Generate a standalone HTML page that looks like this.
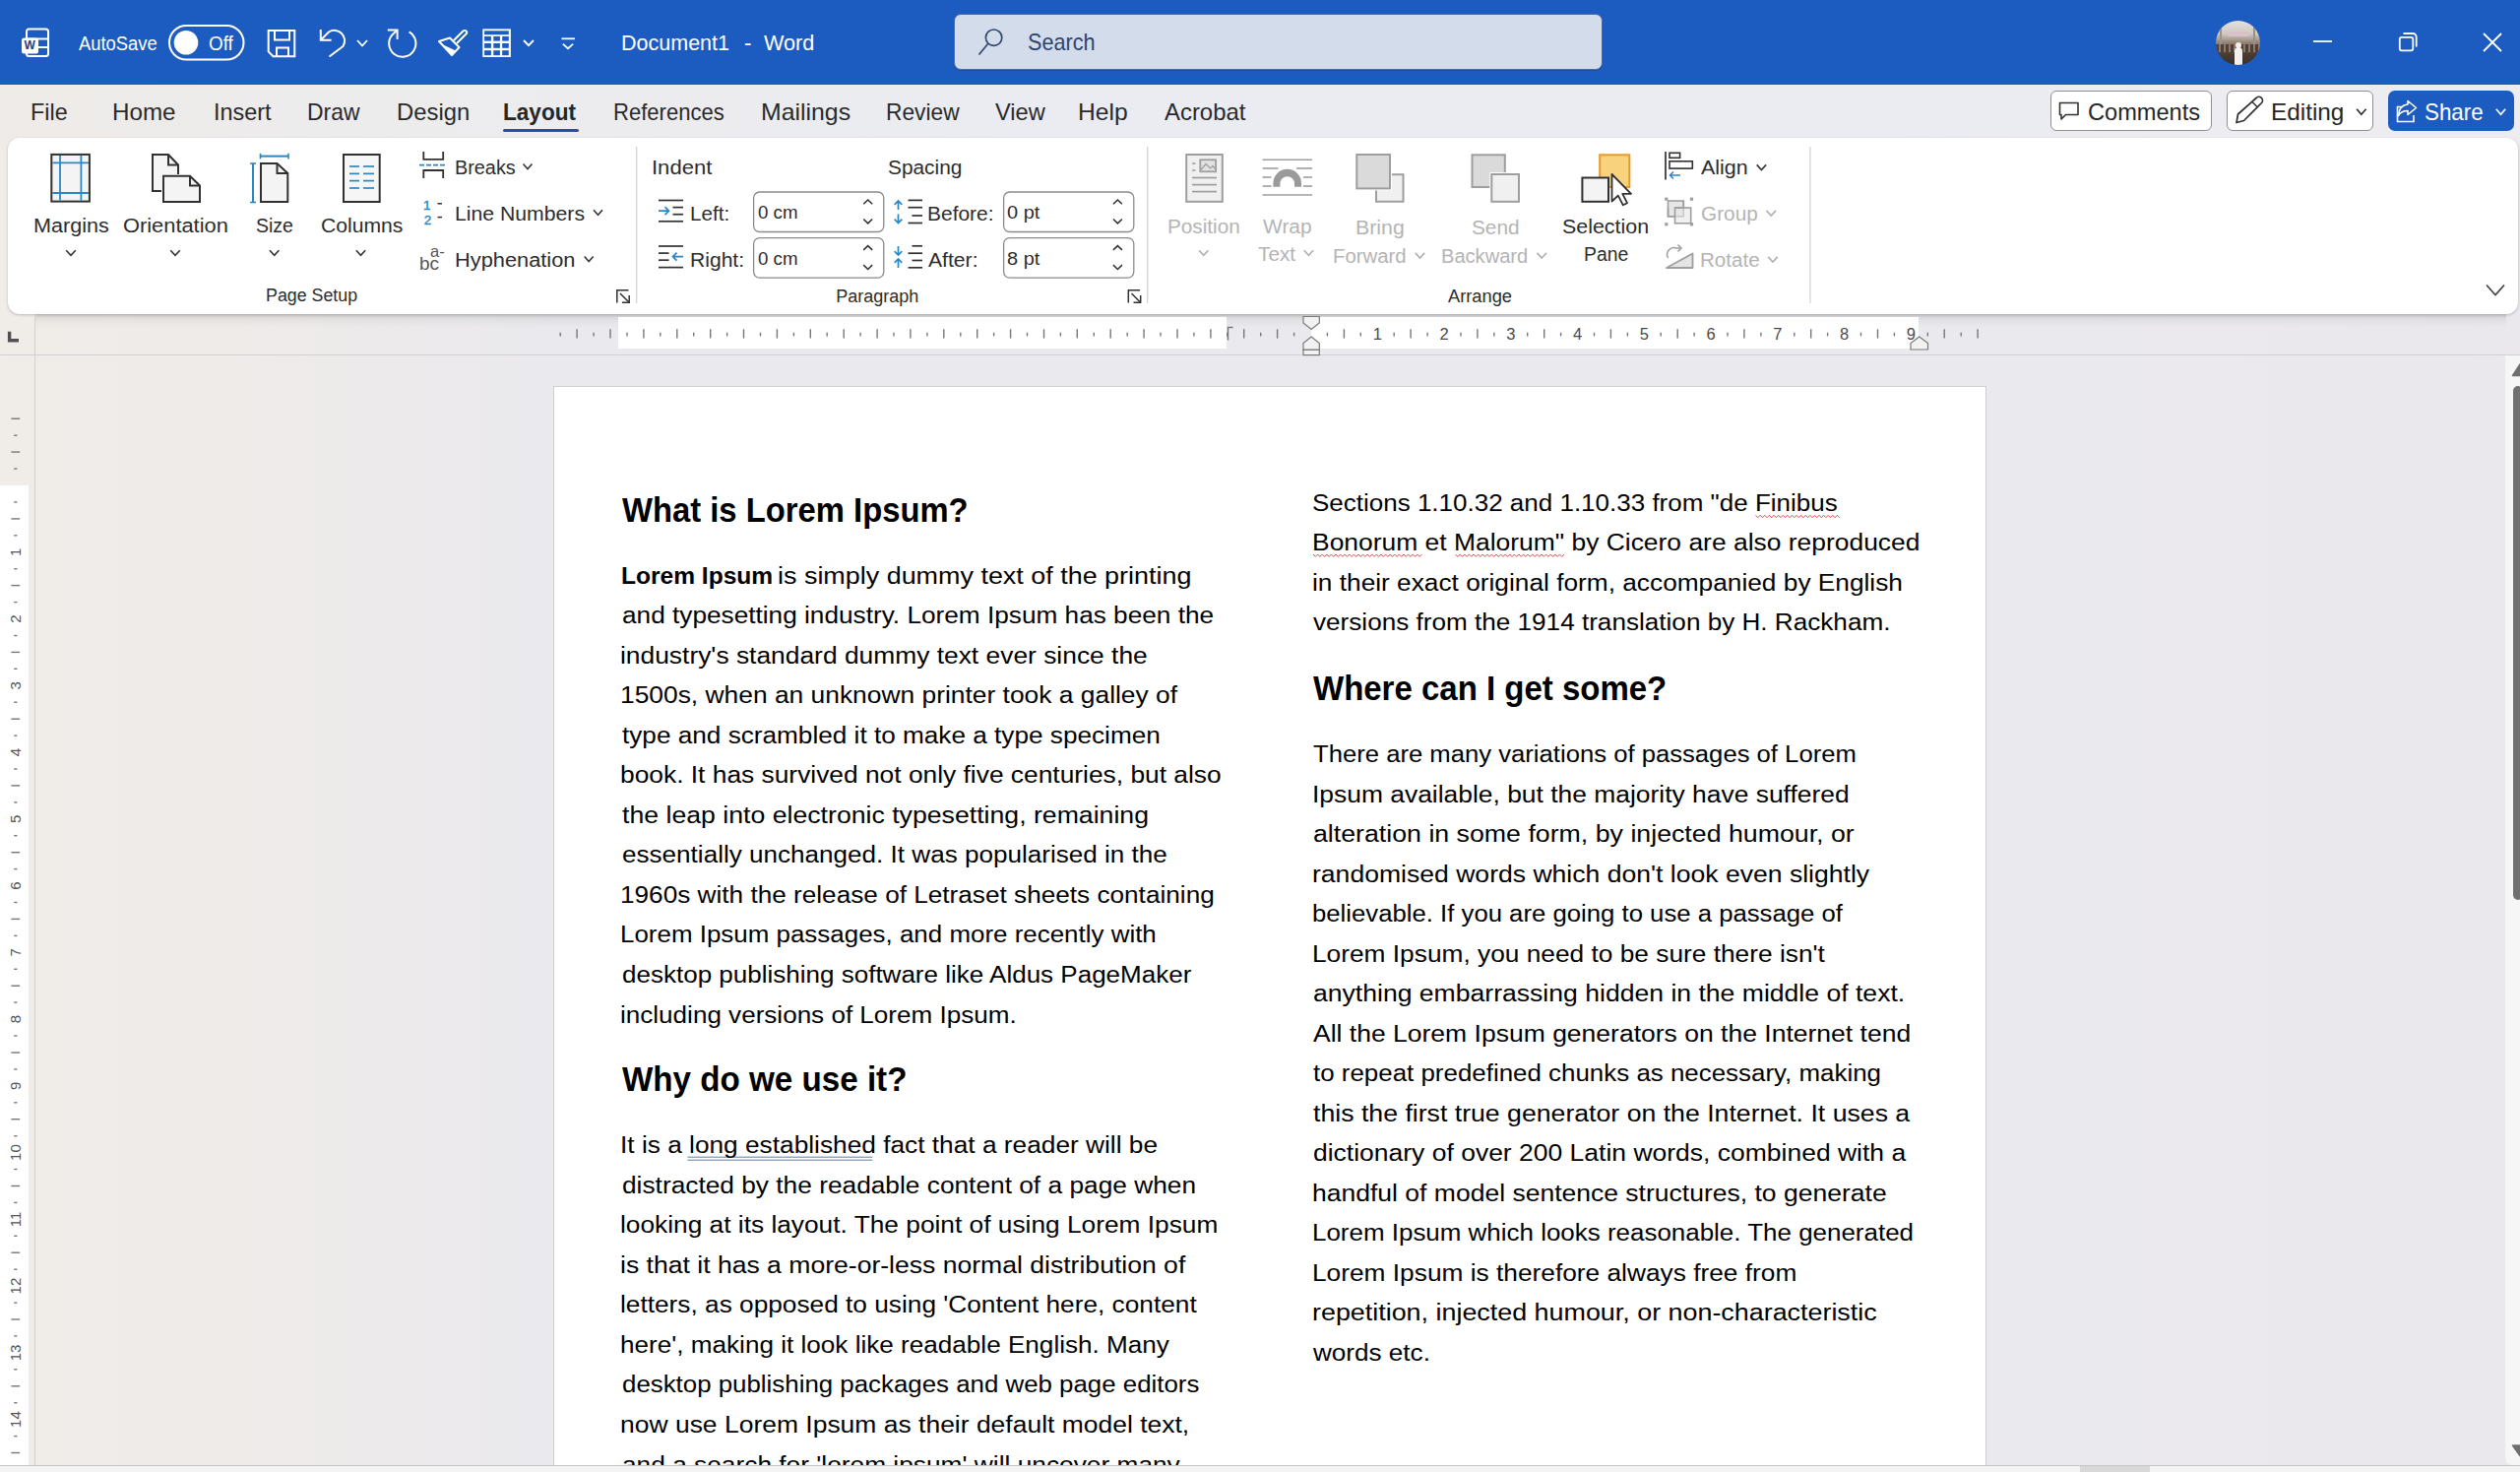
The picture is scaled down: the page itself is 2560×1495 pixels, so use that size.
<!DOCTYPE html>
<html><head><meta charset="utf-8"><style>
*{margin:0;padding:0;box-sizing:border-box}
html,body{width:2560px;height:1495px;overflow:hidden}
body{position:relative;font-family:"Liberation Sans", sans-serif;background:linear-gradient(90deg,#F0ECE8 0%,#EFEBE9 9%,#ECEAEB 16%,#EAE9ED 22%,#EAE9ED 80%,#EAE8ED 100%)}
.t{position:absolute;white-space:pre;transform-origin:0 0;font-family:"Liberation Sans", sans-serif}
.a{position:absolute}
</style></head><body>
<div class="a" style="left:0;top:0;width:2560px;height:86px;background:#1C5BC0"></div>
<div class="a" style="left:0;top:86px;width:2560px;height:60px;background:linear-gradient(90deg,#EEEBE8 0%,#EDECED 15%,#EBECF1 40%,#EBECF1 75%,#EDEDF1 100%)"></div>
<div class="a" style="left:969px;top:14px;width:659px;height:57px;background:#D3DCEB;border:1.5px solid #4E6A9E;border-radius:7px;box-shadow:0 1px 1px rgba(0,0,0,0.15)"></div>
<div class="a" style="left:2251px;top:20.5px;width:45px;height:45px;border-radius:50%;overflow:hidden;background:linear-gradient(180deg,#E4E1DE 0%,#CFC8C2 30%,#8C7A6E 52%,#4A3C33 75%,#3A2F2A 100%)"><div class="a" style="left:13px;top:11px;width:20px;height:5px;background:#D6C2C8"></div><div class="a" style="left:4px;top:5px;width:2px;height:22px;background:#9A908A"></div><div class="a" style="left:38px;top:5px;width:2px;height:22px;background:#9A908A"></div><div class="a" style="left:0px;top:24px;width:45px;height:8px;background:repeating-linear-gradient(90deg,#4E4038 0 3px,#8E7868 3px 5px)"></div><div class="a" style="left:19px;top:27px;width:8px;height:18px;background:#F2EFEC;border-radius:4px 4px 0 0"></div><div class="a" style="left:20px;top:22px;width:6px;height:6px;background:#F2EFEC;border-radius:50%"></div></div>
<div class="a" style="left:2082.5px;top:91.8px;width:164px;height:41.7px;background:#FFFFFF;border:1px solid #8F8F8F;border-radius:6px"></div>
<div class="a" style="left:2262px;top:91.8px;width:149px;height:41.7px;background:#FFFFFF;border:1px solid #8F8F8F;border-radius:6px"></div>
<div class="a" style="left:2426px;top:91.8px;width:127.6px;height:41.7px;background:#1C5BC0;border-radius:7px"></div>
<div class="a" style="left:511.3px;top:130.7px;width:76.4px;height:3.6px;background:#2152A6;border-radius:2px"></div>
<div class="a" style="left:8px;top:140px;width:2550px;height:179px;background:#FFFFFF;border-radius:12px;box-shadow:0 1px 3px rgba(0,0,0,0.22)"></div>
<div class="a" style="left:36px;top:319px;width:2510px;height:41px;background:linear-gradient(180deg,rgba(0,0,0,0.10) 0%,rgba(0,0,0,0.03) 18%,rgba(0,0,0,0) 35%)"></div>
<div class="a" style="left:628px;top:322px;width:618.4px;height:31.7px;background:#FFFFFF"></div>
<div class="a" style="left:1331.5px;top:322px;width:617px;height:31.7px;background:#FFFFFF"></div>
<div class="a" style="left:0;top:360px;width:2560px;height:1px;background:#D2D0D2"></div>
<div class="a" style="left:35px;top:320px;width:1px;height:1168px;background:#D2D0D2"></div>
<div class="a" style="left:0;top:493px;width:29px;height:995px;background:#FFFFFF"></div>
<div class="a" style="left:562px;top:392px;width:1456px;height:1096px;background:#FFFFFF;border-left:1px solid #CFCFCF;border-top:1px solid #CFCFCF;border-right:1px solid #CFCFCF"></div>
<div class="a" style="left:2545px;top:361px;width:15px;height:1127px;background:#F6F6F6;border-radius:0 0 0 7px"></div>
<div class="a" style="left:2553px;top:392px;width:10px;height:522px;background:#707070;border-radius:5px"></div>
<svg class="a" style="left:0;top:0" width="2560" height="1495" viewBox="0 0 2560 1495"><rect x="27" y="29.5" width="22" height="27.5" rx="2.5" fill="none" stroke="#FFFFFF" stroke-width="2"/>
<line x1="27" y1="39.5" x2="49" y2="39.5" stroke="#FFFFFF" stroke-width="2"/>
<line x1="27" y1="48" x2="49" y2="48" stroke="#FFFFFF" stroke-width="2"/>
<rect x="22" y="38.5" width="17" height="16" rx="2.5" fill="#FFFFFF"/>
<text x="24.6" y="50" font-family="Liberation Sans" font-weight="700" font-size="12" fill="#233E80">W</text>
<rect x="172" y="26" width="75.5" height="34.5" rx="17.25" fill="none" stroke="#FFFFFF" stroke-width="2"/>
<circle cx="189" cy="43.2" r="12.3" fill="#FFFFFF"/>
<path d="M272.7 31 H299.3 V57.2 H277.5 L272.7 52.4 Z" fill="none" stroke="#FFFFFF" stroke-width="2"/>
<path d="M279 31 V40.5 H294 V31" fill="none" stroke="#FFFFFF" stroke-width="2"/>
<path d="M281 57.2 V48.5 H293 V57.2" fill="none" stroke="#FFFFFF" stroke-width="2"/>
<path d="M325.8 30 V40.8 H336.6" fill="none" stroke="#FFFFFF" stroke-width="2"/>
<path d="M326.5 40 L334 32.5 A10.5 10.5 0 0 1 348.5 47 L334.5 57.5" fill="none" stroke="#FFFFFF" stroke-width="2" stroke-linejoin="round"/>
<polyline points="363.0,41.0 368.0,46.5 373.0,41.0" fill="none" stroke="#FFFFFF" stroke-width="1.8"/>
<path d="M403.4 30.6 L398.6 35.2 A13.6 13.6 0 1 0 415.6 32.4" fill="none" stroke="#FFFFFF" stroke-width="2" stroke-linejoin="round"/>
<path d="M393.8 30.4 H403.6 V40" fill="none" stroke="#FFFFFF" stroke-width="2"/>
<path d="M461 41 L470.5 31.5 A2 2 0 0 1 473.5 34.5 L464 44" fill="none" stroke="#FFFFFF" stroke-width="2"/>
<path d="M457 38.5 L466.5 48 L459 56 L446 42 Z" fill="none" stroke="#FFFFFF" stroke-width="2" stroke-linejoin="round"/>
<path d="M448 44.5 L459 56 L463 51.5 Z" fill="#FFFFFF"/>
<rect x="490.3" y="29.4" width="28.6" height="28.6" fill="#FFFFFF"/>
<rect x="492.1" y="36.9" width="6.8" height="4.7" fill="#1C5BC0"/>
<rect x="492.1" y="44.0" width="6.8" height="4.8" fill="#1C5BC0"/>
<rect x="492.1" y="51.2" width="6.8" height="5.0" fill="#1C5BC0"/>
<rect x="501.3" y="36.9" width="6.6" height="4.7" fill="#1C5BC0"/>
<rect x="501.3" y="44.0" width="6.6" height="4.8" fill="#1C5BC0"/>
<rect x="501.3" y="51.2" width="6.6" height="5.0" fill="#1C5BC0"/>
<rect x="510.2" y="36.9" width="6.6" height="4.7" fill="#1C5BC0"/>
<rect x="510.2" y="44.0" width="6.6" height="4.8" fill="#1C5BC0"/>
<rect x="510.2" y="51.2" width="6.6" height="5.0" fill="#1C5BC0"/>
<rect x="492.1" y="31.3" width="24.7" height="3.9" fill="#1C5BC0"/>
<polyline points="532.0,41.0 537.0,46.2 542.0,41.0" fill="none" stroke="#FFFFFF" stroke-width="1.9"/>
<line x1="570.5" y1="39.3" x2="584" y2="39.3" stroke="#FFFFFF" stroke-width="1.8"/>
<polyline points="571.8,44.6 577.0,49.2 582.2,44.6" fill="none" stroke="#FFFFFF" stroke-width="1.8"/>
<circle cx="1009.6" cy="38.2" r="8.2" fill="none" stroke="#33476B" stroke-width="1.7"/>
<line x1="1003.8" y1="44.2" x2="994.5" y2="55.5" stroke="#33476B" stroke-width="1.7"/>
<line x1="2350" y1="42" x2="2369" y2="42" stroke="#FFFFFF" stroke-width="1.8"/>
<rect x="2437.8" y="37.8" width="13.5" height="13.5" rx="2" fill="none" stroke="#FFFFFF" stroke-width="1.8"/>
<path d="M2441.5 34 H2451 A3.5 3.5 0 0 1 2454.7 37.7 V47.5" fill="none" stroke="#FFFFFF" stroke-width="1.8"/>
<path d="M2523 34 L2541 52 M2541 34 L2523 52" stroke="#FFFFFF" stroke-width="1.8"/>
<path d="M2092.5 104.5 H2111 V116.5 H2098.5 L2094 121 V116.5 H2092.5 Z" fill="none" stroke="#323130" stroke-width="1.6" stroke-linejoin="round"/>
<path d="M2272 124.5 L2273.5 116 L2292 99.5 A3 3 0 0 1 2297.5 104.5 L2279.5 122.5 Z" fill="none" stroke="#323130" stroke-width="1.7" stroke-linejoin="round"/>
<line x1="2288" y1="103.5" x2="2293.5" y2="109" stroke="#323130" stroke-width="1.5"/>
<polyline points="2394.1,110.8 2398.8,116.2 2403.6,110.8" fill="none" stroke="#323130" stroke-width="1.7"/>
<path d="M2446 106 V102.5 L2454.5 109.5 L2446 116.5 V112.5 C2441 112.5 2438.5 114 2436.5 117.5 C2437 110.5 2440 106.5 2446 106 Z" fill="none" stroke="#FFFFFF" stroke-width="1.6" stroke-linejoin="round"/>
<path d="M2441 108.5 H2435.5 V123.5 H2452 V117" fill="none" stroke="#FFFFFF" stroke-width="1.6"/>
<polyline points="2535.8,110.8 2540.5,116.2 2545.2,110.8" fill="none" stroke="#FFFFFF" stroke-width="1.7"/>
<polyline points="2526.0,289.5 2535.0,299.5 2544.0,289.5" fill="none" stroke="#404040" stroke-width="1.6"/>
<rect x="52.3" y="156.9" width="38.6" height="47.7" fill="#F4F4F4" stroke="#323130" stroke-width="2"/>
<line x1="61" y1="157.9" x2="61" y2="203.6" stroke="#2B87C4" stroke-width="1.8"/>
<line x1="82.4" y1="157.9" x2="82.4" y2="203.6" stroke="#2B87C4" stroke-width="1.8"/>
<line x1="53.3" y1="165.4" x2="89.9" y2="165.4" stroke="#2B87C4" stroke-width="1.8"/>
<line x1="53.3" y1="196" x2="89.9" y2="196" stroke="#2B87C4" stroke-width="1.8"/>
<path d="M164 194 H155 V157 H171 L181 167.5 V177" fill="#F4F4F4" stroke="#323130" stroke-width="2" stroke-linejoin="miter"/>
<path d="M171 157 V167.5 H181" fill="none" stroke="#323130" stroke-width="2"/>
<path d="M166 178.8 H193 L203 188.5 V205 H166 Z" fill="#F4F4F4" stroke="#323130" stroke-width="2"/>
<path d="M193 178.8 V188.5 H203" fill="none" stroke="#323130" stroke-width="2"/>
<line x1="257" y1="166" x2="257" y2="205.5" stroke="#2B87C4" stroke-width="2"/>
<line x1="254" y1="166" x2="260" y2="166" stroke="#2B87C4" stroke-width="1.6"/>
<line x1="254" y1="205.5" x2="260" y2="205.5" stroke="#2B87C4" stroke-width="1.6"/>
<line x1="264.5" y1="158.6" x2="293" y2="158.6" stroke="#2B87C4" stroke-width="2"/>
<line x1="264.5" y1="155.8" x2="264.5" y2="161.4" stroke="#2B87C4" stroke-width="1.6"/>
<line x1="293" y1="155.8" x2="293" y2="161.4" stroke="#2B87C4" stroke-width="1.6"/>
<path d="M265 166 H281.5 L292.3 176 V205 H265 Z" fill="#F4F4F4" stroke="#323130" stroke-width="2"/>
<path d="M281.5 166 V176 H292.3" fill="none" stroke="#323130" stroke-width="2"/>
<rect x="349" y="157" width="36.7" height="48" fill="#F6F6F6" stroke="#323130" stroke-width="2"/>
<line x1="355" y1="169" x2="365" y2="169" stroke="#2B87C4" stroke-width="1.7"/>
<line x1="369" y1="169" x2="380" y2="169" stroke="#2B87C4" stroke-width="1.7"/>
<line x1="355" y1="176.4" x2="365" y2="176.4" stroke="#2B87C4" stroke-width="1.7"/>
<line x1="369" y1="176.4" x2="380" y2="176.4" stroke="#2B87C4" stroke-width="1.7"/>
<line x1="355" y1="183.6" x2="365" y2="183.6" stroke="#2B87C4" stroke-width="1.7"/>
<line x1="369" y1="183.6" x2="380" y2="183.6" stroke="#2B87C4" stroke-width="1.7"/>
<line x1="355" y1="191" x2="365" y2="191" stroke="#2B87C4" stroke-width="1.7"/>
<line x1="369" y1="191" x2="380" y2="191" stroke="#2B87C4" stroke-width="1.7"/>
<polyline points="67.2,254.2 72.0,259.4 76.8,254.2" fill="none" stroke="#363636" stroke-width="1.6"/>
<polyline points="173.2,254.2 178.0,259.4 182.8,254.2" fill="none" stroke="#363636" stroke-width="1.6"/>
<polyline points="273.9,254.2 278.7,259.4 283.4,254.2" fill="none" stroke="#363636" stroke-width="1.6"/>
<polyline points="361.8,254.2 366.5,259.4 371.2,254.2" fill="none" stroke="#363636" stroke-width="1.6"/>
<path d="M430.3 154 V161.8 H450.2 V154" fill="none" stroke="#323130" stroke-width="1.8"/>
<line x1="426" y1="167.6" x2="453" y2="167.6" stroke="#2B87C4" stroke-width="1.6" stroke-dasharray="5,2"/>
<path d="M430.3 181 V173 H450.2 V181" fill="none" stroke="#323130" stroke-width="1.8"/>
<polyline points="531.5,166.5 536.0,171.5 540.5,166.5" fill="none" stroke="#363636" stroke-width="1.6"/>
<text x="430" y="212.5" font-family="Liberation Sans" font-size="13.5" fill="#2B87C4" stroke="#2B87C4" stroke-width="0.4">1</text>
<text x="430.8" y="227.8" font-family="Liberation Sans" font-size="13.5" fill="#2B87C4" stroke="#2B87C4" stroke-width="0.4">2</text>
<line x1="444.5" y1="206.8" x2="449" y2="206.8" stroke="#323130" stroke-width="1.5"/>
<line x1="444.5" y1="220.6" x2="449" y2="220.6" stroke="#323130" stroke-width="1.5"/>
<polyline points="603.0,213.3 607.5,218.3 612.0,213.3" fill="none" stroke="#363636" stroke-width="1.6"/>
<text x="437" y="260.8" font-family="Liberation Sans" font-size="16.5" fill="#555555">a-</text>
<text x="426" y="274.3" font-family="Liberation Sans" font-size="19" fill="#555555">bc</text>
<polyline points="593.7,260.5 598.2,265.5 602.7,260.5" fill="none" stroke="#363636" stroke-width="1.6"/>
<path d="M626.8 307.5 V294.8 H638.5" fill="none" stroke="#323130" stroke-width="1.5"/>
<path d="M630 298 L639 307" fill="none" stroke="#323130" stroke-width="1.5"/>
<path d="M639.2 300 V307.3 H632" fill="none" stroke="#323130" stroke-width="1.5"/>
<path d="M1146.3 307.5 V294.8 H1158.0" fill="none" stroke="#323130" stroke-width="1.5"/>
<path d="M1149.5 298 L1158.5 307" fill="none" stroke="#323130" stroke-width="1.5"/>
<path d="M1158.7 300 V307.3 H1151.5" fill="none" stroke="#323130" stroke-width="1.5"/>
<line x1="646.7" y1="149" x2="646.7" y2="308" stroke="#D4D4D4" stroke-width="1.3"/>
<line x1="1165.7" y1="149" x2="1165.7" y2="308" stroke="#D4D4D4" stroke-width="1.3"/>
<line x1="1838.9" y1="149" x2="1838.9" y2="308" stroke="#D4D4D4" stroke-width="1.3"/>
<line x1="669" y1="203.5" x2="694" y2="203.5" stroke="#323130" stroke-width="1.7"/>
<line x1="683.5" y1="210.6" x2="694" y2="210.6" stroke="#323130" stroke-width="1.7"/>
<line x1="683.5" y1="217.7" x2="694" y2="217.7" stroke="#323130" stroke-width="1.7"/>
<line x1="669" y1="224.8" x2="694" y2="224.8" stroke="#323130" stroke-width="1.7"/>
<path d="M669 214.2 H679.5 M675.5 210.2 L679.5 214.2 L675.5 218.2" fill="none" stroke="#2B87C4" stroke-width="1.7"/>
<line x1="669" y1="250" x2="694" y2="250" stroke="#323130" stroke-width="1.7"/>
<line x1="669" y1="257.1" x2="679.5" y2="257.1" stroke="#323130" stroke-width="1.7"/>
<line x1="669" y1="264.2" x2="679.5" y2="264.2" stroke="#323130" stroke-width="1.7"/>
<line x1="669" y1="271.6" x2="694" y2="271.6" stroke="#323130" stroke-width="1.7"/>
<path d="M694 260.7 H683.5 M687.5 256.7 L683.5 260.7 L687.5 264.7" fill="none" stroke="#2B87C4" stroke-width="1.7"/>
<rect x="765.6" y="195.0" width="132.2" height="40.5" rx="6" fill="#FFFFFF" stroke="#8A8A8A" stroke-width="1.3"/>
<rect x="765.6" y="241.6" width="132.2" height="40.5" rx="6" fill="#FFFFFF" stroke="#8A8A8A" stroke-width="1.3"/>
<rect x="1019.6" y="195.0" width="132.2" height="40.5" rx="6" fill="#FFFFFF" stroke="#8A8A8A" stroke-width="1.3"/>
<rect x="1019.6" y="241.6" width="132.2" height="40.5" rx="6" fill="#FFFFFF" stroke="#8A8A8A" stroke-width="1.3"/>
<polyline points="877.2,207.3 881.7,203.0 886.2,207.3" fill="none" stroke="#323130" stroke-width="1.5"/>
<polyline points="877.2,222.5 881.7,226.9 886.2,222.5" fill="none" stroke="#323130" stroke-width="1.5"/>
<polyline points="877.2,253.9 881.7,249.6 886.2,253.9" fill="none" stroke="#323130" stroke-width="1.5"/>
<polyline points="877.2,269.1 881.7,273.5 886.2,269.1" fill="none" stroke="#323130" stroke-width="1.5"/>
<polyline points="1130.9,207.3 1135.4,203.0 1139.9,207.3" fill="none" stroke="#323130" stroke-width="1.5"/>
<polyline points="1130.9,222.5 1135.4,226.9 1139.9,222.5" fill="none" stroke="#323130" stroke-width="1.5"/>
<polyline points="1130.9,253.9 1135.4,249.6 1139.9,253.9" fill="none" stroke="#323130" stroke-width="1.5"/>
<polyline points="1130.9,269.1 1135.4,273.5 1139.9,269.1" fill="none" stroke="#323130" stroke-width="1.5"/>
<path d="M912.5 213 V204 M908.7 207.8 L912.5 204 L916.3 207.8" fill="none" stroke="#2B87C4" stroke-width="1.7"/>
<path d="M912.5 217.5 V226.5 M908.7 222.7 L912.5 226.5 L916.3 222.7" fill="none" stroke="#2B87C4" stroke-width="1.7"/>
<line x1="922.5" y1="203.4" x2="937" y2="203.4" stroke="#323130" stroke-width="1.7"/>
<line x1="922.5" y1="210.7" x2="937" y2="210.7" stroke="#323130" stroke-width="1.7"/>
<line x1="926.5" y1="219" x2="937" y2="219" stroke="#323130" stroke-width="1.7"/>
<line x1="922.5" y1="226.5" x2="937" y2="226.5" stroke="#323130" stroke-width="1.7"/>
<path d="M912.5 250 V259 M908.7 255.2 L912.5 259 L916.3 255.2" fill="none" stroke="#2B87C4" stroke-width="1.7"/>
<path d="M912.5 272 V263 M908.7 266.8 L912.5 263 L916.3 266.8" fill="none" stroke="#2B87C4" stroke-width="1.7"/>
<line x1="926.5" y1="249.8" x2="937" y2="249.8" stroke="#323130" stroke-width="1.7"/>
<line x1="922.5" y1="257.2" x2="937" y2="257.2" stroke="#323130" stroke-width="1.7"/>
<line x1="926.5" y1="264.5" x2="937" y2="264.5" stroke="#323130" stroke-width="1.7"/>
<line x1="922.5" y1="271.8" x2="937" y2="271.8" stroke="#323130" stroke-width="1.7"/>
<rect x="1205.2" y="157" width="36.6" height="47.8" fill="#F0F0F0" stroke="#9E9E9E" stroke-width="2"/>
<rect x="1219.3" y="162.3" width="15.8" height="12" fill="#E2E2E2" stroke="#9E9E9E" stroke-width="1.8"/>
<path d="M1220 172.5 L1225 166.5 L1229.5 171 L1232 168.5 L1234.5 171.5" fill="none" stroke="#9E9E9E" stroke-width="1.2"/>
<line x1="1211" y1="180.5" x2="1236" y2="180.5" stroke="#9E9E9E" stroke-width="1.7"/>
<line x1="1211" y1="187.6" x2="1236" y2="187.6" stroke="#9E9E9E" stroke-width="1.7"/>
<line x1="1211" y1="194.6" x2="1236" y2="194.6" stroke="#9E9E9E" stroke-width="1.7"/>
<line x1="1211" y1="166" x2="1214.5" y2="166" stroke="#9E9E9E" stroke-width="1.5"/>
<line x1="1211" y1="173" x2="1214.5" y2="173" stroke="#9E9E9E" stroke-width="1.5"/>
<polyline points="1218.0,254.2 1222.8,259.4 1227.5,254.2" fill="none" stroke="#B0B0B0" stroke-width="1.6"/>
<line x1="1282.6" y1="162.2" x2="1333" y2="162.2" stroke="#9E9E9E" stroke-width="1.6"/>
<line x1="1282.6" y1="171" x2="1298.5" y2="171" stroke="#9E9E9E" stroke-width="1.6"/>
<line x1="1317" y1="171" x2="1333" y2="171" stroke="#9E9E9E" stroke-width="1.6"/>
<line x1="1282.6" y1="180" x2="1291.5" y2="180" stroke="#9E9E9E" stroke-width="1.6"/>
<line x1="1324" y1="180" x2="1333" y2="180" stroke="#9E9E9E" stroke-width="1.6"/>
<line x1="1282.6" y1="189" x2="1291.5" y2="189" stroke="#9E9E9E" stroke-width="1.6"/>
<line x1="1324" y1="189" x2="1333" y2="189" stroke="#9E9E9E" stroke-width="1.6"/>
<line x1="1282.6" y1="198" x2="1333" y2="198" stroke="#9E9E9E" stroke-width="1.6"/>
<path d="M1293.4 189.8 V186 A14.3 14.3 0 0 1 1322 186 V189.8 H1315 V186.5 A7.3 7.3 0 0 0 1300.4 186.5 V189.8 Z" fill="#9A9A9A"/>
<polyline points="1324.7,254.2 1329.4,259.4 1334.2,254.2" fill="none" stroke="#B0B0B0" stroke-width="1.6"/>
<path d="M1412 177.3 H1425.5 V204.8 H1398 V191.4 Z" fill="#F0F0F0" stroke="#9E9E9E" stroke-width="2"/>
<rect x="1376.3" y="155" width="37.7" height="38.4" fill="#FFFFFF"/>
<rect x="1378.3" y="157" width="33.7" height="34.4" fill="#DADADA" stroke="#9E9E9E" stroke-width="2"/>
<polyline points="1437.8,256.9 1442.5,262.1 1447.2,256.9" fill="none" stroke="#B0B0B0" stroke-width="1.6"/>
<rect x="1495.5" y="157.3" width="33.3" height="32.7" fill="#DADADA" stroke="#9E9E9E" stroke-width="2"/>
<rect x="1513.3" y="175" width="31.7" height="31.8" fill="#FFFFFF"/>
<rect x="1515.3" y="177" width="27.7" height="27.8" fill="#F0F0F0" stroke="#9E9E9E" stroke-width="2"/>
<polyline points="1561.5,256.9 1566.3,262.1 1571.0,256.9" fill="none" stroke="#B0B0B0" stroke-width="1.6"/>
<rect x="1625.2" y="157.3" width="30.1" height="32.7" fill="#F8D27C" stroke="#E49A2A" stroke-width="2"/>
<rect x="1607.4" y="180.5" width="26.6" height="24.3" fill="#F4F4F4" stroke="#323130" stroke-width="2"/>
<path d="M1637.5 177 V204.5 L1643.8 198.7 L1648.8 208.3 L1653 206.2 L1648.3 196.8 H1657 Z" fill="#FFFFFF" stroke="#323130" stroke-width="1.8" stroke-linejoin="round"/>
<line x1="1692" y1="154" x2="1692" y2="182.5" stroke="#323130" stroke-width="1.7"/>
<rect x="1696" y="155.3" width="10.6" height="5" fill="none" stroke="#323130" stroke-width="1.6"/>
<rect x="1696" y="163.8" width="23.3" height="7.3" fill="none" stroke="#323130" stroke-width="1.6"/>
<path d="M1707 178 H1696.5 M1700 174.5 L1696.5 178 L1700 181.5" fill="none" stroke="#2B87C4" stroke-width="1.6"/>
<polyline points="1784.7,167.4 1789.4,172.6 1794.2,167.4" fill="none" stroke="#363636" stroke-width="1.6"/>
<rect x="1691.2" y="200.6" width="3.2" height="3.2" fill="#9E9E9E"/>
<rect x="1716.9" y="200.6" width="3.2" height="3.2" fill="#9E9E9E"/>
<rect x="1691.2" y="226.20000000000002" width="3.2" height="3.2" fill="#9E9E9E"/>
<rect x="1716.9" y="226.20000000000002" width="3.2" height="3.2" fill="#9E9E9E"/>
<rect x="1694.5" y="204" width="15.8" height="15.8" fill="#E6E6E6" stroke="#9E9E9E" stroke-width="1.6"/>
<rect x="1701.5" y="211" width="16.2" height="15.8" fill="#E6E6E6" fill-opacity="0.6" stroke="#9E9E9E" stroke-width="1.6"/>
<path d="M1694.5 211 V219.8 H1701.5" fill="none" stroke="#9E9E9E" stroke-width="1.6"/>
<path d="M1701.5 211 H1710.3 V204" fill="none" stroke="#9E9E9E" stroke-width="1.6"/>
<polyline points="1794.5,213.9 1799.2,219.1 1804.0,213.9" fill="none" stroke="#B0B0B0" stroke-width="1.6"/>
<path d="M1693 272 L1719.5 257.5 V272 Z" fill="#E4E4E4" stroke="#9E9E9E" stroke-width="1.8" stroke-linejoin="round"/>
<path d="M1694.5 262 A7 7 0 0 1 1703 252 H1708" fill="none" stroke="#9E9E9E" stroke-width="1.5"/>
<path d="M1704.5 248.5 L1708 252 L1704.5 255.5" fill="none" stroke="#9E9E9E" stroke-width="1.5"/>
<polyline points="1796.2,260.9 1801.0,266.1 1805.8,260.9" fill="none" stroke="#B0B0B0" stroke-width="1.6"/>
<line x1="569.2" y1="337.8" x2="569.2" y2="341.4" stroke="#777777" stroke-width="1.4"/>
<line x1="586.1" y1="334.3" x2="586.1" y2="343.6" stroke="#777777" stroke-width="1.4"/>
<line x1="603.1" y1="337.8" x2="603.1" y2="341.4" stroke="#777777" stroke-width="1.4"/>
<line x1="620.0" y1="334.3" x2="620.0" y2="343.6" stroke="#777777" stroke-width="1.4"/>
<line x1="637.0" y1="337.8" x2="637.0" y2="341.4" stroke="#777777" stroke-width="1.4"/>
<line x1="653.9" y1="334.3" x2="653.9" y2="343.6" stroke="#777777" stroke-width="1.4"/>
<line x1="670.8" y1="337.8" x2="670.8" y2="341.4" stroke="#777777" stroke-width="1.4"/>
<line x1="687.8" y1="334.3" x2="687.8" y2="343.6" stroke="#777777" stroke-width="1.4"/>
<line x1="704.7" y1="337.8" x2="704.7" y2="341.4" stroke="#777777" stroke-width="1.4"/>
<line x1="721.7" y1="334.3" x2="721.7" y2="343.6" stroke="#777777" stroke-width="1.4"/>
<line x1="738.6" y1="337.8" x2="738.6" y2="341.4" stroke="#777777" stroke-width="1.4"/>
<line x1="755.5" y1="334.3" x2="755.5" y2="343.6" stroke="#777777" stroke-width="1.4"/>
<line x1="772.5" y1="337.8" x2="772.5" y2="341.4" stroke="#777777" stroke-width="1.4"/>
<line x1="789.4" y1="334.3" x2="789.4" y2="343.6" stroke="#777777" stroke-width="1.4"/>
<line x1="806.4" y1="337.8" x2="806.4" y2="341.4" stroke="#777777" stroke-width="1.4"/>
<line x1="823.3" y1="334.3" x2="823.3" y2="343.6" stroke="#777777" stroke-width="1.4"/>
<line x1="840.2" y1="337.8" x2="840.2" y2="341.4" stroke="#777777" stroke-width="1.4"/>
<line x1="857.2" y1="334.3" x2="857.2" y2="343.6" stroke="#777777" stroke-width="1.4"/>
<line x1="874.1" y1="337.8" x2="874.1" y2="341.4" stroke="#777777" stroke-width="1.4"/>
<line x1="891.1" y1="334.3" x2="891.1" y2="343.6" stroke="#777777" stroke-width="1.4"/>
<line x1="908.0" y1="337.8" x2="908.0" y2="341.4" stroke="#777777" stroke-width="1.4"/>
<line x1="924.9" y1="334.3" x2="924.9" y2="343.6" stroke="#777777" stroke-width="1.4"/>
<line x1="941.9" y1="337.8" x2="941.9" y2="341.4" stroke="#777777" stroke-width="1.4"/>
<line x1="958.8" y1="334.3" x2="958.8" y2="343.6" stroke="#777777" stroke-width="1.4"/>
<line x1="975.8" y1="337.8" x2="975.8" y2="341.4" stroke="#777777" stroke-width="1.4"/>
<line x1="992.7" y1="334.3" x2="992.7" y2="343.6" stroke="#777777" stroke-width="1.4"/>
<line x1="1009.6" y1="337.8" x2="1009.6" y2="341.4" stroke="#777777" stroke-width="1.4"/>
<line x1="1026.6" y1="334.3" x2="1026.6" y2="343.6" stroke="#777777" stroke-width="1.4"/>
<line x1="1043.5" y1="337.8" x2="1043.5" y2="341.4" stroke="#777777" stroke-width="1.4"/>
<line x1="1060.5" y1="334.3" x2="1060.5" y2="343.6" stroke="#777777" stroke-width="1.4"/>
<line x1="1077.4" y1="337.8" x2="1077.4" y2="341.4" stroke="#777777" stroke-width="1.4"/>
<line x1="1094.3" y1="334.3" x2="1094.3" y2="343.6" stroke="#777777" stroke-width="1.4"/>
<line x1="1111.3" y1="337.8" x2="1111.3" y2="341.4" stroke="#777777" stroke-width="1.4"/>
<line x1="1128.2" y1="334.3" x2="1128.2" y2="343.6" stroke="#777777" stroke-width="1.4"/>
<line x1="1145.2" y1="337.8" x2="1145.2" y2="341.4" stroke="#777777" stroke-width="1.4"/>
<line x1="1162.1" y1="334.3" x2="1162.1" y2="343.6" stroke="#777777" stroke-width="1.4"/>
<line x1="1179.0" y1="337.8" x2="1179.0" y2="341.4" stroke="#777777" stroke-width="1.4"/>
<line x1="1196.0" y1="334.3" x2="1196.0" y2="343.6" stroke="#777777" stroke-width="1.4"/>
<line x1="1212.9" y1="337.8" x2="1212.9" y2="341.4" stroke="#777777" stroke-width="1.4"/>
<line x1="1229.9" y1="334.3" x2="1229.9" y2="343.6" stroke="#777777" stroke-width="1.4"/>
<line x1="1246.8" y1="337.8" x2="1246.8" y2="341.4" stroke="#777777" stroke-width="1.4"/>
<line x1="1263.7" y1="334.3" x2="1263.7" y2="343.6" stroke="#777777" stroke-width="1.4"/>
<line x1="1280.7" y1="337.8" x2="1280.7" y2="341.4" stroke="#777777" stroke-width="1.4"/>
<line x1="1297.6" y1="334.3" x2="1297.6" y2="343.6" stroke="#777777" stroke-width="1.4"/>
<line x1="1314.6" y1="337.8" x2="1314.6" y2="341.4" stroke="#777777" stroke-width="1.4"/>
<line x1="1348.4" y1="337.8" x2="1348.4" y2="341.4" stroke="#777777" stroke-width="1.4"/>
<line x1="1365.4" y1="334.3" x2="1365.4" y2="343.6" stroke="#777777" stroke-width="1.4"/>
<line x1="1382.3" y1="337.8" x2="1382.3" y2="341.4" stroke="#777777" stroke-width="1.4"/>
<text x="1399.3" y="345" text-anchor="middle" font-family="Liberation Sans" font-size="16.5" fill="#4A4A4A">1</text>
<line x1="1416.2" y1="337.8" x2="1416.2" y2="341.4" stroke="#777777" stroke-width="1.4"/>
<line x1="1433.1" y1="334.3" x2="1433.1" y2="343.6" stroke="#777777" stroke-width="1.4"/>
<line x1="1450.1" y1="337.8" x2="1450.1" y2="341.4" stroke="#777777" stroke-width="1.4"/>
<text x="1467.0" y="345" text-anchor="middle" font-family="Liberation Sans" font-size="16.5" fill="#4A4A4A">2</text>
<line x1="1484.0" y1="337.8" x2="1484.0" y2="341.4" stroke="#777777" stroke-width="1.4"/>
<line x1="1500.9" y1="334.3" x2="1500.9" y2="343.6" stroke="#777777" stroke-width="1.4"/>
<line x1="1517.8" y1="337.8" x2="1517.8" y2="341.4" stroke="#777777" stroke-width="1.4"/>
<text x="1534.8" y="345" text-anchor="middle" font-family="Liberation Sans" font-size="16.5" fill="#4A4A4A">3</text>
<line x1="1551.7" y1="337.8" x2="1551.7" y2="341.4" stroke="#777777" stroke-width="1.4"/>
<line x1="1568.7" y1="334.3" x2="1568.7" y2="343.6" stroke="#777777" stroke-width="1.4"/>
<line x1="1585.6" y1="337.8" x2="1585.6" y2="341.4" stroke="#777777" stroke-width="1.4"/>
<text x="1602.5" y="345" text-anchor="middle" font-family="Liberation Sans" font-size="16.5" fill="#4A4A4A">4</text>
<line x1="1619.5" y1="337.8" x2="1619.5" y2="341.4" stroke="#777777" stroke-width="1.4"/>
<line x1="1636.4" y1="334.3" x2="1636.4" y2="343.6" stroke="#777777" stroke-width="1.4"/>
<line x1="1653.4" y1="337.8" x2="1653.4" y2="341.4" stroke="#777777" stroke-width="1.4"/>
<text x="1670.3" y="345" text-anchor="middle" font-family="Liberation Sans" font-size="16.5" fill="#4A4A4A">5</text>
<line x1="1687.2" y1="337.8" x2="1687.2" y2="341.4" stroke="#777777" stroke-width="1.4"/>
<line x1="1704.2" y1="334.3" x2="1704.2" y2="343.6" stroke="#777777" stroke-width="1.4"/>
<line x1="1721.1" y1="337.8" x2="1721.1" y2="341.4" stroke="#777777" stroke-width="1.4"/>
<text x="1738.1" y="345" text-anchor="middle" font-family="Liberation Sans" font-size="16.5" fill="#4A4A4A">6</text>
<line x1="1755.0" y1="337.8" x2="1755.0" y2="341.4" stroke="#777777" stroke-width="1.4"/>
<line x1="1771.9" y1="334.3" x2="1771.9" y2="343.6" stroke="#777777" stroke-width="1.4"/>
<line x1="1788.9" y1="337.8" x2="1788.9" y2="341.4" stroke="#777777" stroke-width="1.4"/>
<text x="1805.8" y="345" text-anchor="middle" font-family="Liberation Sans" font-size="16.5" fill="#4A4A4A">7</text>
<line x1="1822.8" y1="337.8" x2="1822.8" y2="341.4" stroke="#777777" stroke-width="1.4"/>
<line x1="1839.7" y1="334.3" x2="1839.7" y2="343.6" stroke="#777777" stroke-width="1.4"/>
<line x1="1856.6" y1="337.8" x2="1856.6" y2="341.4" stroke="#777777" stroke-width="1.4"/>
<text x="1873.6" y="345" text-anchor="middle" font-family="Liberation Sans" font-size="16.5" fill="#4A4A4A">8</text>
<line x1="1890.5" y1="337.8" x2="1890.5" y2="341.4" stroke="#777777" stroke-width="1.4"/>
<line x1="1907.5" y1="334.3" x2="1907.5" y2="343.6" stroke="#777777" stroke-width="1.4"/>
<line x1="1924.4" y1="337.8" x2="1924.4" y2="341.4" stroke="#777777" stroke-width="1.4"/>
<text x="1941.3" y="345" text-anchor="middle" font-family="Liberation Sans" font-size="16.5" fill="#4A4A4A">9</text>
<line x1="1958.3" y1="337.8" x2="1958.3" y2="341.4" stroke="#777777" stroke-width="1.4"/>
<line x1="1975.2" y1="334.3" x2="1975.2" y2="343.6" stroke="#777777" stroke-width="1.4"/>
<line x1="1992.2" y1="337.8" x2="1992.2" y2="341.4" stroke="#777777" stroke-width="1.4"/>
<line x1="2009.1" y1="334.3" x2="2009.1" y2="343.6" stroke="#777777" stroke-width="1.4"/>
<path d="M1247.5 345.5 V332.5 H1252.5" fill="none" stroke="#777777" stroke-width="1.4"/>
<path d="M1324 321.5 H1340.3 V328 L1332.2 334.5 L1324 328 Z" fill="#F2F2F2" stroke="#7A7A7A" stroke-width="1.2"/>
<path d="M1324 355.3 V348.5 L1332.2 342 L1340.3 348.5 V355.3 Z" fill="#F2F2F2" stroke="#7A7A7A" stroke-width="1.2"/>
<rect x="1324" y="355.3" width="16.3" height="5.3" fill="#F2F2F2" stroke="#7A7A7A" stroke-width="1.2"/>
<path d="M1941 355 V348.5 L1949.8 342 L1958.5 348.5 V355 Z" fill="#F2F2F2" stroke="#7A7A7A" stroke-width="1.2"/>
<path d="M9.6 336.8 V345.8 H19" fill="none" stroke="#505050" stroke-width="3.4"/>
<line x1="11.4" y1="425.2" x2="20.2" y2="425.2" stroke="#777777" stroke-width="1.4"/>
<line x1="14.2" y1="442.2" x2="17.4" y2="442.2" stroke="#777777" stroke-width="1.4"/>
<line x1="11.4" y1="459.1" x2="20.2" y2="459.1" stroke="#777777" stroke-width="1.4"/>
<line x1="14.2" y1="476.1" x2="17.4" y2="476.1" stroke="#777777" stroke-width="1.4"/>
<line x1="14.2" y1="509.9" x2="17.4" y2="509.9" stroke="#777777" stroke-width="1.4"/>
<line x1="11.4" y1="526.9" x2="20.2" y2="526.9" stroke="#777777" stroke-width="1.4"/>
<line x1="14.2" y1="543.8" x2="17.4" y2="543.8" stroke="#777777" stroke-width="1.4"/>
<text x="0" y="0" transform="translate(20.8 560.8) rotate(-90)" text-anchor="middle" font-family="Liberation Sans" font-size="15" fill="#555555">1</text>
<line x1="14.2" y1="577.7" x2="17.4" y2="577.7" stroke="#777777" stroke-width="1.4"/>
<line x1="11.4" y1="594.6" x2="20.2" y2="594.6" stroke="#777777" stroke-width="1.4"/>
<line x1="14.2" y1="611.6" x2="17.4" y2="611.6" stroke="#777777" stroke-width="1.4"/>
<text x="0" y="0" transform="translate(20.8 628.5) rotate(-90)" text-anchor="middle" font-family="Liberation Sans" font-size="15" fill="#555555">2</text>
<line x1="14.2" y1="645.5" x2="17.4" y2="645.5" stroke="#777777" stroke-width="1.4"/>
<line x1="11.4" y1="662.4" x2="20.2" y2="662.4" stroke="#777777" stroke-width="1.4"/>
<line x1="14.2" y1="679.3" x2="17.4" y2="679.3" stroke="#777777" stroke-width="1.4"/>
<text x="0" y="0" transform="translate(20.8 696.3) rotate(-90)" text-anchor="middle" font-family="Liberation Sans" font-size="15" fill="#555555">3</text>
<line x1="14.2" y1="713.2" x2="17.4" y2="713.2" stroke="#777777" stroke-width="1.4"/>
<line x1="11.4" y1="730.2" x2="20.2" y2="730.2" stroke="#777777" stroke-width="1.4"/>
<line x1="14.2" y1="747.1" x2="17.4" y2="747.1" stroke="#777777" stroke-width="1.4"/>
<text x="0" y="0" transform="translate(20.8 764.0) rotate(-90)" text-anchor="middle" font-family="Liberation Sans" font-size="15" fill="#555555">4</text>
<line x1="14.2" y1="781.0" x2="17.4" y2="781.0" stroke="#777777" stroke-width="1.4"/>
<line x1="11.4" y1="797.9" x2="20.2" y2="797.9" stroke="#777777" stroke-width="1.4"/>
<line x1="14.2" y1="814.9" x2="17.4" y2="814.9" stroke="#777777" stroke-width="1.4"/>
<text x="0" y="0" transform="translate(20.8 831.8) rotate(-90)" text-anchor="middle" font-family="Liberation Sans" font-size="15" fill="#555555">5</text>
<line x1="14.2" y1="848.7" x2="17.4" y2="848.7" stroke="#777777" stroke-width="1.4"/>
<line x1="11.4" y1="865.7" x2="20.2" y2="865.7" stroke="#777777" stroke-width="1.4"/>
<line x1="14.2" y1="882.6" x2="17.4" y2="882.6" stroke="#777777" stroke-width="1.4"/>
<text x="0" y="0" transform="translate(20.8 899.6) rotate(-90)" text-anchor="middle" font-family="Liberation Sans" font-size="15" fill="#555555">6</text>
<line x1="14.2" y1="916.5" x2="17.4" y2="916.5" stroke="#777777" stroke-width="1.4"/>
<line x1="11.4" y1="933.4" x2="20.2" y2="933.4" stroke="#777777" stroke-width="1.4"/>
<line x1="14.2" y1="950.4" x2="17.4" y2="950.4" stroke="#777777" stroke-width="1.4"/>
<text x="0" y="0" transform="translate(20.8 967.3) rotate(-90)" text-anchor="middle" font-family="Liberation Sans" font-size="15" fill="#555555">7</text>
<line x1="14.2" y1="984.3" x2="17.4" y2="984.3" stroke="#777777" stroke-width="1.4"/>
<line x1="11.4" y1="1001.2" x2="20.2" y2="1001.2" stroke="#777777" stroke-width="1.4"/>
<line x1="14.2" y1="1018.1" x2="17.4" y2="1018.1" stroke="#777777" stroke-width="1.4"/>
<text x="0" y="0" transform="translate(20.8 1035.1) rotate(-90)" text-anchor="middle" font-family="Liberation Sans" font-size="15" fill="#555555">8</text>
<line x1="14.2" y1="1052.0" x2="17.4" y2="1052.0" stroke="#777777" stroke-width="1.4"/>
<line x1="11.4" y1="1069.0" x2="20.2" y2="1069.0" stroke="#777777" stroke-width="1.4"/>
<line x1="14.2" y1="1085.9" x2="17.4" y2="1085.9" stroke="#777777" stroke-width="1.4"/>
<text x="0" y="0" transform="translate(20.8 1102.8) rotate(-90)" text-anchor="middle" font-family="Liberation Sans" font-size="15" fill="#555555">9</text>
<line x1="14.2" y1="1119.8" x2="17.4" y2="1119.8" stroke="#777777" stroke-width="1.4"/>
<line x1="11.4" y1="1136.7" x2="20.2" y2="1136.7" stroke="#777777" stroke-width="1.4"/>
<line x1="14.2" y1="1153.7" x2="17.4" y2="1153.7" stroke="#777777" stroke-width="1.4"/>
<text x="0" y="0" transform="translate(20.8 1170.6) rotate(-90)" text-anchor="middle" font-family="Liberation Sans" font-size="15" fill="#555555">10</text>
<line x1="14.2" y1="1187.5" x2="17.4" y2="1187.5" stroke="#777777" stroke-width="1.4"/>
<line x1="11.4" y1="1204.5" x2="20.2" y2="1204.5" stroke="#777777" stroke-width="1.4"/>
<line x1="14.2" y1="1221.4" x2="17.4" y2="1221.4" stroke="#777777" stroke-width="1.4"/>
<text x="0" y="0" transform="translate(20.8 1238.4) rotate(-90)" text-anchor="middle" font-family="Liberation Sans" font-size="15" fill="#555555">11</text>
<line x1="14.2" y1="1255.3" x2="17.4" y2="1255.3" stroke="#777777" stroke-width="1.4"/>
<line x1="11.4" y1="1272.2" x2="20.2" y2="1272.2" stroke="#777777" stroke-width="1.4"/>
<line x1="14.2" y1="1289.2" x2="17.4" y2="1289.2" stroke="#777777" stroke-width="1.4"/>
<text x="0" y="0" transform="translate(20.8 1306.1) rotate(-90)" text-anchor="middle" font-family="Liberation Sans" font-size="15" fill="#555555">12</text>
<line x1="14.2" y1="1323.1" x2="17.4" y2="1323.1" stroke="#777777" stroke-width="1.4"/>
<line x1="11.4" y1="1340.0" x2="20.2" y2="1340.0" stroke="#777777" stroke-width="1.4"/>
<line x1="14.2" y1="1356.9" x2="17.4" y2="1356.9" stroke="#777777" stroke-width="1.4"/>
<text x="0" y="0" transform="translate(20.8 1373.9) rotate(-90)" text-anchor="middle" font-family="Liberation Sans" font-size="15" fill="#555555">13</text>
<line x1="14.2" y1="1390.8" x2="17.4" y2="1390.8" stroke="#777777" stroke-width="1.4"/>
<line x1="11.4" y1="1407.8" x2="20.2" y2="1407.8" stroke="#777777" stroke-width="1.4"/>
<line x1="14.2" y1="1424.7" x2="17.4" y2="1424.7" stroke="#777777" stroke-width="1.4"/>
<text x="0" y="0" transform="translate(20.8 1441.6) rotate(-90)" text-anchor="middle" font-family="Liberation Sans" font-size="15" fill="#555555">14</text>
<line x1="14.2" y1="1458.6" x2="17.4" y2="1458.6" stroke="#777777" stroke-width="1.4"/>
<line x1="11.4" y1="1475.5" x2="20.2" y2="1475.5" stroke="#777777" stroke-width="1.4"/>
<path d="M2552.5 381.5 L2560 370 L2567.5 381.5 Z" fill="#6E6E6E" stroke="#6E6E6E" stroke-width="1.5" stroke-linejoin="round"/>
<path d="M2552.5 1468 L2567.5 1468 L2560 1478.5 Z" fill="#6E6E6E" stroke="#6E6E6E" stroke-width="1.5" stroke-linejoin="round"/>
<line x1="698.4" y1="1175.2" x2="886.3" y2="1175.2" stroke="#5F7FA8" stroke-width="1"/>
<line x1="698.4" y1="1178.2" x2="886.3" y2="1178.2" stroke="#5F7FA8" stroke-width="1"/>
<polyline points="1783.6,523.3 1785.9,525.7 1788.2,523.3 1790.5,525.7 1792.8,523.3 1795.1,525.7 1797.4,523.3 1799.7,525.7 1802.0,523.3 1804.3,525.7 1806.6,523.3 1808.9,525.7 1811.2,523.3 1813.5,525.7 1815.8,523.3 1818.1,525.7 1820.4,523.3 1822.7,525.7 1825.0,523.3 1827.3,525.7 1829.6,523.3 1831.9,525.7 1834.2,523.3 1836.5,525.7 1838.8,523.3 1841.1,525.7 1843.4,523.3 1845.7,525.7 1848.0,523.3 1850.3,525.7 1852.6,523.3 1854.9,525.7 1857.2,523.3 1859.5,525.7 1861.8,523.3 1864.1,525.7 1866.4,523.3 1868.7,525.7" fill="none" stroke="#D9534F" stroke-width="1"/>
<polyline points="1334.0,563.0 1336.3,565.4 1338.6,563.0 1340.9,565.4 1343.2,563.0 1345.5,565.4 1347.8,563.0 1350.1,565.4 1352.4,563.0 1354.7,565.4 1357.0,563.0 1359.3,565.4 1361.6,563.0 1363.9,565.4 1366.2,563.0 1368.5,565.4 1370.8,563.0 1373.1,565.4 1375.4,563.0 1377.7,565.4 1380.0,563.0 1382.3,565.4 1384.6,563.0 1386.9,565.4 1389.2,563.0 1391.5,565.4 1393.8,563.0 1396.1,565.4 1398.4,563.0 1400.7,565.4 1403.0,563.0 1405.3,565.4 1407.6,563.0 1409.9,565.4 1412.2,563.0 1414.5,565.4 1416.8,563.0 1419.1,565.4 1421.4,563.0 1423.7,565.4 1426.0,563.0 1428.3,565.4 1430.6,563.0 1432.9,565.4 1435.2,563.0 1437.5,565.4 1439.8,563.0 1442.1,565.4 1444.4,563.0" fill="none" stroke="#D9534F" stroke-width="1"/>
<polyline points="1478.6,563.0 1480.9,565.4 1483.2,563.0 1485.5,565.4 1487.8,563.0 1490.1,565.4 1492.4,563.0 1494.7,565.4 1497.0,563.0 1499.3,565.4 1501.6,563.0 1503.9,565.4 1506.2,563.0 1508.5,565.4 1510.8,563.0 1513.1,565.4 1515.4,563.0 1517.7,565.4 1520.0,563.0 1522.3,565.4 1524.6,563.0 1526.9,565.4 1529.2,563.0 1531.5,565.4 1533.8,563.0 1536.1,565.4 1538.4,563.0 1540.7,565.4 1543.0,563.0 1545.3,565.4 1547.6,563.0 1549.9,565.4 1552.2,563.0 1554.5,565.4 1556.8,563.0 1559.1,565.4 1561.4,563.0 1563.7,565.4 1566.0,563.0 1568.3,565.4 1570.6,563.0 1572.9,565.4 1575.2,563.0 1577.5,565.4 1579.8,563.0 1582.1,565.4 1584.4,563.0 1586.7,565.4 1589.0,563.0" fill="none" stroke="#D9534F" stroke-width="1"/></svg>
<div class="t" style="left:80.00px;top:34.47px;font-size:20px;line-height:20px;font-weight:400;color:#FFFFFF;transform:scaleX(0.9186)">AutoSave</div><div class="t" style="left:211.50px;top:34.47px;font-size:20px;line-height:20px;font-weight:400;color:#FFFFFF;transform:scaleX(0.9444)">Off</div><div class="t" style="left:630.54px;top:32.95px;font-size:22.5px;line-height:22.5px;font-weight:400;color:#FFFFFF;transform:scaleX(0.9561)">Document1</div><div class="t" style="left:756.00px;top:32.95px;font-size:22.5px;line-height:22.5px;font-weight:400;color:#FFFFFF;transform:scaleX(1.0000)">-</div><div class="t" style="left:776.00px;top:32.95px;font-size:22.5px;line-height:22.5px;font-weight:400;color:#FFFFFF;transform:scaleX(0.9623)">Word</div><div class="t" style="left:1043.50px;top:31.38px;font-size:24px;line-height:24px;font-weight:400;color:#2E4470;transform:scaleX(0.9013)">Search</div><div class="t" style="left:31.03px;top:102.18px;font-size:24px;line-height:24px;font-weight:400;color:#2A2A2A;transform:scaleX(0.9730)">File</div><div class="t" style="left:114.49px;top:102.18px;font-size:24px;line-height:24px;font-weight:400;color:#2A2A2A;transform:scaleX(1.0079)">Home</div><div class="t" style="left:216.53px;top:102.18px;font-size:24px;line-height:24px;font-weight:400;color:#2A2A2A;transform:scaleX(0.9746)">Insert</div><div class="t" style="left:312.04px;top:102.18px;font-size:24px;line-height:24px;font-weight:400;color:#2A2A2A;transform:scaleX(0.9554)">Draw</div><div class="t" style="left:403.01px;top:102.18px;font-size:24px;line-height:24px;font-weight:400;color:#2A2A2A;transform:scaleX(0.9932)">Design</div><div class="t" style="left:622.58px;top:102.18px;font-size:24px;line-height:24px;font-weight:400;color:#2A2A2A;transform:scaleX(0.9180)">References</div><div class="t" style="left:772.77px;top:102.18px;font-size:24px;line-height:24px;font-weight:400;color:#2A2A2A;transform:scaleX(1.0345)">Mailings</div><div class="t" style="left:900.05px;top:102.18px;font-size:24px;line-height:24px;font-weight:400;color:#2A2A2A;transform:scaleX(0.9487)">Review</div><div class="t" style="left:1010.70px;top:102.18px;font-size:24px;line-height:24px;font-weight:400;color:#2A2A2A;transform:scaleX(0.9846)">View</div><div class="t" style="left:1095.37px;top:102.18px;font-size:24px;line-height:24px;font-weight:400;color:#2A2A2A;transform:scaleX(1.0271)">Help</div><div class="t" style="left:1183.30px;top:102.18px;font-size:24px;line-height:24px;font-weight:400;color:#2A2A2A;transform:scaleX(0.9964)">Acrobat</div><div class="t" style="left:511.36px;top:102.18px;font-size:24px;line-height:24px;font-weight:700;color:#262626;transform:scaleX(0.9410)">Layout</div><div class="t" style="left:2120.50px;top:101.98px;font-size:24px;line-height:24px;font-weight:400;color:#262626;transform:scaleX(0.9828)">Comments</div><div class="t" style="left:2306.89px;top:101.98px;font-size:24px;line-height:24px;font-weight:400;color:#262626;transform:scaleX(1.0139)">Editing</div><div class="t" style="left:2463.37px;top:101.98px;font-size:24px;line-height:24px;font-weight:400;color:#FFFFFF;transform:scaleX(0.9302)">Share</div><div class="t" style="left:33.92px;top:219.07px;font-size:20px;line-height:20px;font-weight:400;color:#2C2C2C;transform:scaleX(1.0786)">Margins</div><div class="t" style="left:124.80px;top:219.07px;font-size:20px;line-height:20px;font-weight:400;color:#2C2C2C;transform:scaleX(1.0918)">Orientation</div><div class="t" style="left:259.53px;top:219.07px;font-size:20px;line-height:20px;font-weight:400;color:#2C2C2C;transform:scaleX(0.9737)">Size</div><div class="t" style="left:325.50px;top:219.07px;font-size:20px;line-height:20px;font-weight:400;color:#2C2C2C;transform:scaleX(1.0570)">Columns</div><div class="t" style="left:269.81px;top:291.46px;font-size:18px;line-height:18px;font-weight:400;color:#2C2C2C;transform:scaleX(0.9892)">Page Setup</div><div class="t" style="left:461.61px;top:159.77px;font-size:20px;line-height:20px;font-weight:400;color:#2C2C2C;transform:scaleX(0.9918)">Breaks</div><div class="t" style="left:461.54px;top:207.07px;font-size:20px;line-height:20px;font-weight:400;color:#2C2C2C;transform:scaleX(1.0605)">Line Numbers</div><div class="t" style="left:461.51px;top:254.07px;font-size:20px;line-height:20px;font-weight:400;color:#2C2C2C;transform:scaleX(1.0901)">Hyphenation</div><div class="t" style="left:661.70px;top:160.37px;font-size:20px;line-height:20px;font-weight:400;color:#2C2C2C;transform:scaleX(1.1018)">Indent</div><div class="t" style="left:701.27px;top:207.07px;font-size:20px;line-height:20px;font-weight:400;color:#2C2C2C;transform:scaleX(1.0324)">Left:</div><div class="t" style="left:701.25px;top:254.07px;font-size:20px;line-height:20px;font-weight:400;color:#2C2C2C;transform:scaleX(1.0540)">Right:</div><div class="t" style="left:769.80px;top:206.22px;font-size:19px;line-height:19px;font-weight:400;color:#2C2C2C;transform:scaleX(0.9854)">0 cm</div><div class="t" style="left:769.80px;top:252.82px;font-size:19px;line-height:19px;font-weight:400;color:#2C2C2C;transform:scaleX(0.9854)">0 cm</div><div class="t" style="left:902.36px;top:160.07px;font-size:20px;line-height:20px;font-weight:400;color:#2C2C2C;transform:scaleX(1.0423)">Spacing</div><div class="t" style="left:942.15px;top:207.07px;font-size:20px;line-height:20px;font-weight:400;color:#2C2C2C;transform:scaleX(1.0476)">Before:</div><div class="t" style="left:943.20px;top:254.07px;font-size:20px;line-height:20px;font-weight:400;color:#2C2C2C;transform:scaleX(1.0574)">After:</div><div class="t" style="left:1023.30px;top:206.22px;font-size:19px;line-height:19px;font-weight:400;color:#2C2C2C;transform:scaleX(1.0500)">0 pt</div><div class="t" style="left:1023.30px;top:252.82px;font-size:19px;line-height:19px;font-weight:400;color:#2C2C2C;transform:scaleX(1.0500)">8 pt</div><div class="t" style="left:849.30px;top:291.76px;font-size:18px;line-height:18px;font-weight:400;color:#2C2C2C;transform:scaleX(1.0000)">Paragraph</div><div class="t" style="left:1186.16px;top:219.87px;font-size:20px;line-height:20px;font-weight:400;color:#B4B4B4;transform:scaleX(1.0371)">Position</div><div class="t" style="left:1283.20px;top:219.87px;font-size:20px;line-height:20px;font-weight:400;color:#B4B4B4;transform:scaleX(1.0468)">Wrap</div><div class="t" style="left:1278.00px;top:248.07px;font-size:20px;line-height:20px;font-weight:400;color:#B4B4B4;transform:scaleX(1.0378)">Text</div><div class="t" style="left:1376.93px;top:221.47px;font-size:20px;line-height:20px;font-weight:400;color:#B4B4B4;transform:scaleX(1.0667)">Bring</div><div class="t" style="left:1353.98px;top:249.57px;font-size:20px;line-height:20px;font-weight:400;color:#B4B4B4;transform:scaleX(1.0181)">Forward</div><div class="t" style="left:1494.66px;top:221.37px;font-size:20px;line-height:20px;font-weight:400;color:#B4B4B4;transform:scaleX(1.0400)">Send</div><div class="t" style="left:1463.80px;top:250.07px;font-size:20px;line-height:20px;font-weight:400;color:#B4B4B4;transform:scaleX(1.0046)">Backward</div><div class="t" style="left:1586.73px;top:219.67px;font-size:20px;line-height:20px;font-weight:400;color:#2C2C2C;transform:scaleX(1.0704)">Selection</div><div class="t" style="left:1609.03px;top:247.87px;font-size:20px;line-height:20px;font-weight:400;color:#2C2C2C;transform:scaleX(0.9689)">Pane</div><div class="t" style="left:1727.80px;top:160.17px;font-size:20px;line-height:20px;font-weight:400;color:#2C2C2C;transform:scaleX(1.0727)">Align</div><div class="t" style="left:1727.80px;top:206.67px;font-size:20px;line-height:20px;font-weight:400;color:#B4B4B4;transform:scaleX(1.0393)">Group</div><div class="t" style="left:1726.77px;top:253.87px;font-size:20px;line-height:20px;font-weight:400;color:#B4B4B4;transform:scaleX(1.0293)">Rotate</div><div class="t" style="left:1471.00px;top:291.76px;font-size:18px;line-height:18px;font-weight:400;color:#2C2C2C;transform:scaleX(1.0156)">Arrange</div><div class="t" style="left:631.60px;top:499.87px;font-size:35px;line-height:35px;font-weight:700;color:#000000;transform:scaleX(0.9369)">What is Lorem Ipsum?</div><div class="t" style="left:630.53px;top:573.53px;font-size:23px;line-height:23px;font-weight:700;color:#000000;transform:scaleX(1.0671)">Lorem Ipsum</div><div class="t" style="left:790.43px;top:573.53px;font-size:23px;line-height:23px;font-weight:400;color:#000000;transform:scaleX(1.1704)">is simply dummy text of the printing</div><div class="t" style="left:631.60px;top:614.08px;font-size:23px;line-height:23px;font-weight:400;color:#000000;transform:scaleX(1.1393)">and typesetting industry. Lorem Ipsum has been the</div><div class="t" style="left:630.45px;top:654.63px;font-size:23px;line-height:23px;font-weight:400;color:#000000;transform:scaleX(1.1468)">industry's standard dummy text ever since the</div><div class="t" style="left:630.45px;top:695.18px;font-size:23px;line-height:23px;font-weight:400;color:#000000;transform:scaleX(1.1469)">1500s, when an unknown printer took a galley of</div><div class="t" style="left:631.60px;top:735.73px;font-size:23px;line-height:23px;font-weight:400;color:#000000;transform:scaleX(1.1375)">type and scrambled it to make a type specimen</div><div class="t" style="left:630.45px;top:776.28px;font-size:23px;line-height:23px;font-weight:400;color:#000000;transform:scaleX(1.1455)">book. It has survived not only five centuries, but also</div><div class="t" style="left:631.60px;top:816.83px;font-size:23px;line-height:23px;font-weight:400;color:#000000;transform:scaleX(1.1592)">the leap into electronic typesetting, remaining</div><div class="t" style="left:631.60px;top:857.38px;font-size:23px;line-height:23px;font-weight:400;color:#000000;transform:scaleX(1.1340)">essentially unchanged. It was popularised in the</div><div class="t" style="left:630.46px;top:897.93px;font-size:23px;line-height:23px;font-weight:400;color:#000000;transform:scaleX(1.1378)">1960s with the release of Letraset sheets containing</div><div class="t" style="left:630.47px;top:938.48px;font-size:23px;line-height:23px;font-weight:400;color:#000000;transform:scaleX(1.1274)">Lorem Ipsum passages, and more recently with</div><div class="t" style="left:631.60px;top:979.03px;font-size:23px;line-height:23px;font-weight:400;color:#000000;transform:scaleX(1.1309)">desktop publishing software like Aldus PageMaker</div><div class="t" style="left:630.47px;top:1019.58px;font-size:23px;line-height:23px;font-weight:400;color:#000000;transform:scaleX(1.1331)">including versions of Lorem Ipsum.</div><div class="t" style="left:631.60px;top:1078.37px;font-size:35px;line-height:35px;font-weight:700;color:#000000;transform:scaleX(0.9480)">Why do we use it?</div><div class="t" style="left:630.46px;top:1152.13px;font-size:23px;line-height:23px;font-weight:400;color:#000000;transform:scaleX(1.1419)">It is a long established fact that a reader will be</div><div class="t" style="left:631.60px;top:1192.68px;font-size:23px;line-height:23px;font-weight:400;color:#000000;transform:scaleX(1.1427)">distracted by the readable content of a page when</div><div class="t" style="left:630.46px;top:1233.23px;font-size:23px;line-height:23px;font-weight:400;color:#000000;transform:scaleX(1.1428)">looking at its layout. The point of using Lorem Ipsum</div><div class="t" style="left:630.45px;top:1273.78px;font-size:23px;line-height:23px;font-weight:400;color:#000000;transform:scaleX(1.1549)">is that it has a more-or-less normal distribution of</div><div class="t" style="left:630.46px;top:1314.33px;font-size:23px;line-height:23px;font-weight:400;color:#000000;transform:scaleX(1.1411)">letters, as opposed to using 'Content here, content</div><div class="t" style="left:630.46px;top:1354.88px;font-size:23px;line-height:23px;font-weight:400;color:#000000;transform:scaleX(1.1352)">here', making it look like readable English. Many</div><div class="t" style="left:631.60px;top:1395.43px;font-size:23px;line-height:23px;font-weight:400;color:#000000;transform:scaleX(1.1239)">desktop publishing packages and web page editors</div><div class="t" style="left:630.45px;top:1435.98px;font-size:23px;line-height:23px;font-weight:400;color:#000000;transform:scaleX(1.1508)">now use Lorem Ipsum as their default model text,</div><div class="t" style="left:631.60px;top:1476.53px;font-size:23px;line-height:23px;font-weight:400;color:#000000;transform:scaleX(1.1431)">and a search for 'lorem ipsum' will uncover many</div><div class="t" style="left:1332.57px;top:499.63px;font-size:23px;line-height:23px;font-weight:400;color:#000000;transform:scaleX(1.1301)">Sections 1.10.32 and 1.10.33 from "de Finibus</div><div class="t" style="left:1332.55px;top:540.18px;font-size:23px;line-height:23px;font-weight:400;color:#000000;transform:scaleX(1.1489)">Bonorum et Malorum" by Cicero are also reproduced</div><div class="t" style="left:1332.56px;top:580.73px;font-size:23px;line-height:23px;font-weight:400;color:#000000;transform:scaleX(1.1418)">in their exact original form, accompanied by English</div><div class="t" style="left:1333.70px;top:621.28px;font-size:23px;line-height:23px;font-weight:400;color:#000000;transform:scaleX(1.1355)">versions from the 1914 translation by H. Rackham.</div><div class="t" style="left:1333.70px;top:681.07px;font-size:35px;line-height:35px;font-weight:700;color:#000000;transform:scaleX(0.9424)">Where can I get some?</div><div class="t" style="left:1333.70px;top:755.03px;font-size:23px;line-height:23px;font-weight:400;color:#000000;transform:scaleX(1.1154)">There are many variations of passages of Lorem</div><div class="t" style="left:1332.55px;top:795.53px;font-size:23px;line-height:23px;font-weight:400;color:#000000;transform:scaleX(1.1483)">Ipsum available, but the majority have suffered</div><div class="t" style="left:1333.70px;top:836.03px;font-size:23px;line-height:23px;font-weight:400;color:#000000;transform:scaleX(1.1622)">alteration in some form, by injected humour, or</div><div class="t" style="left:1332.55px;top:876.53px;font-size:23px;line-height:23px;font-weight:400;color:#000000;transform:scaleX(1.1549)">randomised words which don't look even slightly</div><div class="t" style="left:1332.58px;top:917.03px;font-size:23px;line-height:23px;font-weight:400;color:#000000;transform:scaleX(1.1180)">believable. If you are going to use a passage of</div><div class="t" style="left:1332.56px;top:957.53px;font-size:23px;line-height:23px;font-weight:400;color:#000000;transform:scaleX(1.1429)">Lorem Ipsum, you need to be sure there isn't</div><div class="t" style="left:1333.70px;top:998.03px;font-size:23px;line-height:23px;font-weight:400;color:#000000;transform:scaleX(1.1553)">anything embarrassing hidden in the middle of text.</div><div class="t" style="left:1333.70px;top:1038.53px;font-size:23px;line-height:23px;font-weight:400;color:#000000;transform:scaleX(1.1527)">All the Lorem Ipsum generators on the Internet tend</div><div class="t" style="left:1333.70px;top:1079.03px;font-size:23px;line-height:23px;font-weight:400;color:#000000;transform:scaleX(1.1264)">to repeat predefined chunks as necessary, making</div><div class="t" style="left:1333.70px;top:1119.53px;font-size:23px;line-height:23px;font-weight:400;color:#000000;transform:scaleX(1.1593)">this the first true generator on the Internet. It uses a</div><div class="t" style="left:1333.70px;top:1160.03px;font-size:23px;line-height:23px;font-weight:400;color:#000000;transform:scaleX(1.1516)">dictionary of over 200 Latin words, combined with a</div><div class="t" style="left:1332.55px;top:1200.53px;font-size:23px;line-height:23px;font-weight:400;color:#000000;transform:scaleX(1.1527)">handful of model sentence structures, to generate</div><div class="t" style="left:1332.57px;top:1241.03px;font-size:23px;line-height:23px;font-weight:400;color:#000000;transform:scaleX(1.1280)">Lorem Ipsum which looks reasonable. The generated</div><div class="t" style="left:1332.56px;top:1281.53px;font-size:23px;line-height:23px;font-weight:400;color:#000000;transform:scaleX(1.1429)">Lorem Ipsum is therefore always free from</div><div class="t" style="left:1332.53px;top:1322.03px;font-size:23px;line-height:23px;font-weight:400;color:#000000;transform:scaleX(1.1686)">repetition, injected humour, or non-characteristic</div><div class="t" style="left:1333.70px;top:1362.53px;font-size:23px;line-height:23px;font-weight:400;color:#000000;transform:scaleX(1.1346)">words etc.</div>
<div class="a" style="left:0;top:1488px;width:2560px;height:7px;background:#F4F4F4;border-top:1px solid #C6C6C6"></div>
<div class="a" style="left:2113px;top:1489px;width:71px;height:6px;background:#D8D8D8"></div>
</body></html>
